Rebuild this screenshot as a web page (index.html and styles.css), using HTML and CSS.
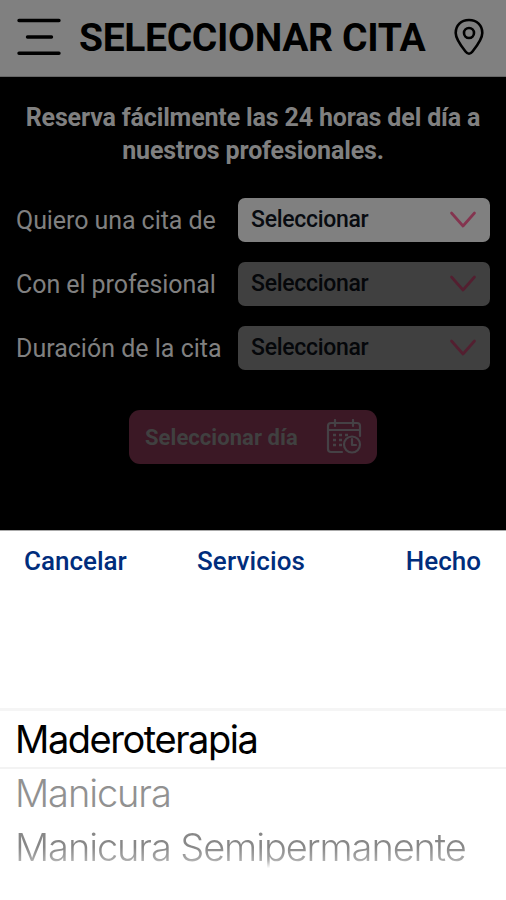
FILE: index.html
```html
<!DOCTYPE html>
<html lang="es">
<head>
<meta charset="utf-8">
<title>Seleccionar cita</title>
<link rel="stylesheet" href="styles.css">
</head>
<body>
<header class="topbar">
  <svg class="menu" width="46" height="40" viewBox="0 0 46 40"><path d="M3 3.500H43M11.500 20H35.500M3 36.200H43"/></svg>
  <h1>SELECCIONAR CITA</h1>
  <svg class="pin" width="32" height="40" viewBox="0 0 32 40"><path d="M16 3C8 3 2.700 8.500 2.700 16C2.700 21.500 6.500 27 12.500 34.500Q16 39 19.500 34.500C25.500 27 29.300 21.500 29.300 16C29.300 8.500 24 3 16 3Z"/><circle cx="16" cy="16" r="5"/></svg>
</header>
<main>
  <p class="intro">Reserva fácilmente las 24 horas del día a<br>nuestros profesionales.</p>
  <div class="form">
    <div class="row"><span class="label">Quiero una cita de</span><div class="select"><span>Seleccionar</span><svg width="28" height="20" viewBox="0 0 28 20"><path d="M2.500 3L14 16L25.500 3"/></svg></div></div>
    <div class="row"><span class="label">Con el profesional</span><div class="select off"><span>Seleccionar</span><svg width="28" height="20" viewBox="0 0 28 20"><path d="M2.500 3L14 16L25.500 3"/></svg></div></div>
    <div class="row"><span class="label wide">Duración de la cita</span><div class="select off"><span>Seleccionar</span><svg width="28" height="20" viewBox="0 0 28 20"><path d="M2.500 3L14 16L25.500 3"/></svg></div></div>
  </div>
  <div class="button"><span>Seleccionar día</span>
    <svg width="36" height="36" viewBox="0 0 36 36"><path d="M16 33H5Q2 33 2 30V7Q2 4 5 4H31Q34 4 34 7V17M2 11H34M9 1V7M27 1V7"/><circle cx="26" cy="25.500" r="8"/><path d="M26 20V26H30"/><path class="dots" d="M7 16H10M13 16H16M19 16H22M7 21H10M13 21H16M7 26H10M13 26H16"/></svg>
  </div>
</main>
<section class="sheet">
  <nav><span>Cancelar</span><span class="services">Servicios</span><span>Hecho</span></nav>
  <div class="picker">
    <div class="item current">Maderoterapia</div>
    <div class="item">Manicura</div>
    <div class="item fade"><span>Manicura Semipermanente</span></div>
  </div>
</section>
</body>
</html>
```
FILE: styles.css
```css
* { box-sizing: border-box; }
body { margin: 0; width: 506px; height: 900px; overflow: hidden; background: #000; color: #808080; font-family: Roboto, "Liberation Sans", sans-serif; display: flex; flex-direction: column; white-space: nowrap; }
svg { fill: none; stroke-linecap: round; stroke-linejoin: round; flex: none; }
.topbar { height: 77px; background: #808080; border-bottom: 1px solid #666; display: flex; align-items: flex-start; padding: 17px 21px 0 16px; flex: none; }
.menu { stroke: #000; stroke-width: 3.4; }
.pin { stroke: #000; stroke-width: 2.6; margin-left: auto; }
h1 { margin: -3px 0 0 17px; font-size: 39px; line-height: 48px; font-weight: 700; color: #000; letter-spacing: -0.33px; }
main { height: 453px; flex: none; display: flex; flex-direction: column; align-items: center; }
.intro { margin: 24px 0 0; text-align: center; font-size: 25px; font-weight: 700; line-height: 33px; letter-spacing: -0.15px; }
.form { width: 100%; padding: 30.5px 16px 0; display: flex; flex-direction: column; gap: 20px; }
.row { display: flex; align-items: center; justify-content: space-between; height: 44px; }
.label { font-size: 25px; padding-top: 1px; letter-spacing: -0.07px; }
.label.wide { letter-spacing: 0; }
.select { width: 252px; height: 44px; border-radius: 7px; background: #808080; color: #080b10; display: flex; align-items: center; justify-content: space-between; padding: 0 13.5px 0 13px; font-size: 23px; font-weight: 500; letter-spacing: -0.3px; }
.select svg { stroke: #84344f; stroke-width: 2.7; }
.select.off { background: #404040; color: #05070a; }
.select.off svg { stroke: #531f30; }
.button { margin-top: 40.5px; width: 248px; height: 54px; border-radius: 11px; background: #3b1825; color: #404040; display: flex; align-items: center; justify-content: space-between; padding: 0 15px 0 16px; font-size: 22px; font-weight: 700; letter-spacing: 0.05px; }
.button svg { stroke: #454145; stroke-width: 2.2; }
.button .dots { stroke-linecap: butt; stroke-width: 2.5; }
.sheet { flex: 1; background: #fff; border-top: 1px solid #aaa; }
nav { display: grid; grid-template-columns: 173px 1fr auto; padding: 14px 25px 0 24px; font-size: 26px; font-weight: 500; line-height: 32px; color: #002d7c; }
.services { letter-spacing: 0.12px; }
.picker { margin-top: 131px; border-top: 3px solid #f5f5f5; font-family: Inter, "Liberation Sans", sans-serif; font-size: 38px; }
.item { height: 54px; line-height: 48px; padding-left: 15px; color: #919191; font-weight: 300; letter-spacing: -1.1px; }
.item.current { height: 58px; line-height: 57px; border-bottom: 2px solid #f3f3f3; color: #000; font-weight: 400; letter-spacing: -1.45px; }
.item.fade span { background: linear-gradient(#888 0 50%, #aaa 78%, #fff 96%); background-clip: text; color: transparent; }
```
